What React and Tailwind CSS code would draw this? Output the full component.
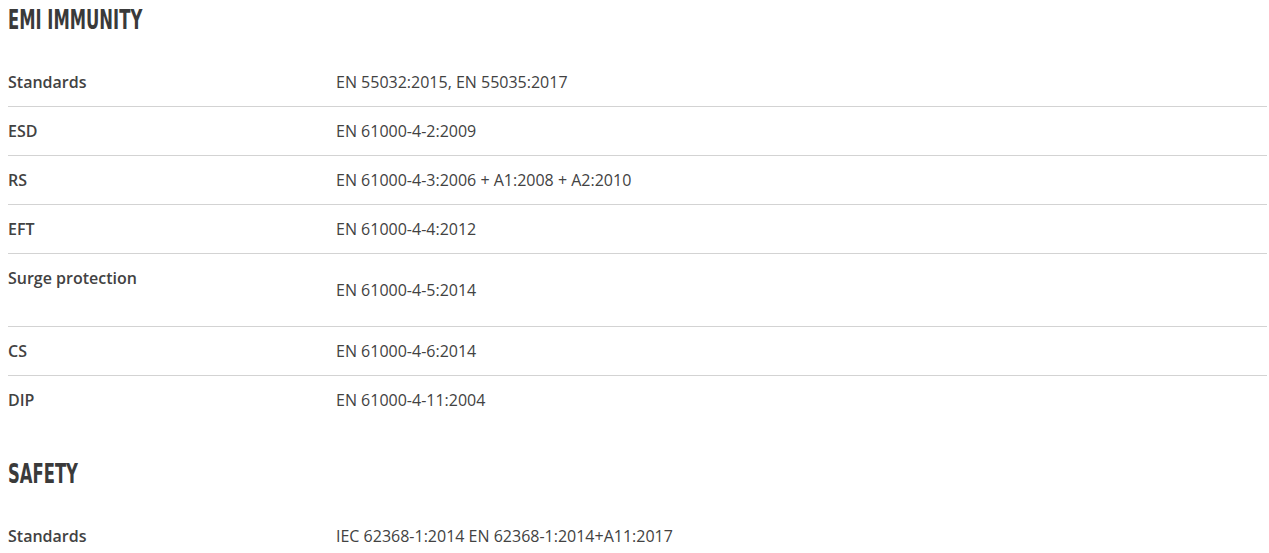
const sections = [
  {
    title: "EMI IMMUNITY",
    rows: [
      { label: "Standards", value: "EN 55032:2015, EN 55035:2017" },
      { label: "ESD", value: "EN 61000-4-2:2009" },
      { label: "RS", value: "EN 61000-4-3:2006 + A1:2008 + A2:2010" },
      { label: "EFT", value: "EN 61000-4-4:2012" },
      { label: "Surge protection", value: "EN 61000-4-5:2014", tall: true },
      { label: "CS", value: "EN 61000-4-6:2014" },
      { label: "DIP", value: "EN 61000-4-11:2004" },
    ],
  },
  {
    title: "SAFETY",
    rows: [{ label: "Standards", value: "IEC 62368-1:2014 EN 62368-1:2014+A11:2017" }],
  },
];

function SpecRow({ label, value, tall, last }) {
  if (tall) {
    return (
      <div className="flex h-[73px] border-b border-[#d3d3d3]">
        <div className="w-[328px] pt-[13px] font-semibold leading-[22px]">{label}</div>
        <div className="flex-1 flex items-center leading-[22px]">{value}</div>
      </div>
    );
  }
  return (
    <div
      className={
        last
          ? "flex items-center h-[48px]"
          : "flex items-center h-[49px] border-b border-[#d3d3d3]"
      }
    >
      <div className="w-[328px] font-semibold leading-[22px]">{label}</div>
      <div className="flex-1 leading-[22px]">{value}</div>
    </div>
  );
}

export default function App() {
  return (
    <div
      className="bg-white min-h-screen pl-2 pr-[2px] text-[16px] text-[#424242]"
      style={{ fontFamily: '"Open Sans", sans-serif' }}
    >
      {sections.map((s, i) => (
        <section key={s.title} className={i > 0 ? "mt-[30px]" : ""}>
          <h2 className="h-[40px] mb-[18px] flex items-center text-[27px] font-bold text-[#3a3a3a]">
            <span
              className="inline-block origin-left scale-x-[0.675] whitespace-nowrap"
              style={{ fontFamily: '"DejaVu Sans Condensed", "DejaVu Sans", sans-serif' }}
            >
              {s.title}
            </span>
          </h2>
          <div>
            {s.rows.map((r, j) => (
              <SpecRow key={r.label} {...r} last={j === s.rows.length - 1} />
            ))}
          </div>
        </section>
      ))}
    </div>
  );
}
